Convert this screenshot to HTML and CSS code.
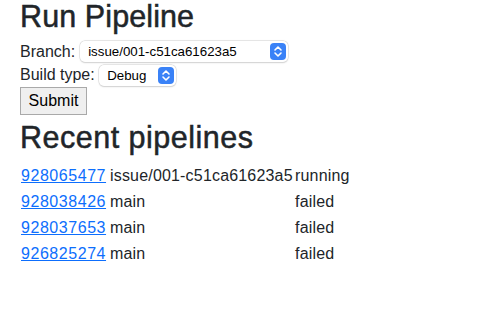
FILE: index.html
```html
<!DOCTYPE html>
<html lang="en">
<head>
<meta charset="utf-8">
<title>Run Pipeline</title>
<link rel="stylesheet" href="styles.css">
</head>
<body>
<h1 class="title">Run Pipeline</h1>
<form class="run-form">
  <div class="field">
    <label>Branch:</label>
    <span class="select select-branch"><span class="select-value">issue/001-c51ca61623a5</span><span class="select-btn"><svg width="16" height="17" viewBox="0 0 16 17"><path d="M5 7 L8 4 L11 7 M5 10 L8 13 L11 10" fill="none" stroke="#fff" stroke-width="1.6" stroke-linecap="round" stroke-linejoin="round"/></svg></span></span>
  </div>
  <div class="field">
    <label>Build type:</label>
    <span class="select select-type"><span class="select-value">Debug</span><span class="select-btn"><svg width="16" height="17" viewBox="0 0 16 17"><path d="M5 7 L8 4 L11 7 M5 10 L8 13 L11 10" fill="none" stroke="#fff" stroke-width="1.6" stroke-linecap="round" stroke-linejoin="round"/></svg></span></span>
  </div>
  <button type="button" class="submit">Submit</button>
</form>
<h2 class="title title-recent">Recent pipelines</h2>
<table class="pipelines">
  <colgroup><col class="c1"><col class="c2"><col></colgroup>
  <tr><td><a href="#">928065477</a></td><td>issue/001-c51ca61623a5</td><td>running</td></tr>
  <tr><td><a href="#">928038426</a></td><td>main</td><td>failed</td></tr>
  <tr><td><a href="#">928037653</a></td><td>main</td><td>failed</td></tr>
  <tr><td><a href="#">926825274</a></td><td>main</td><td>failed</td></tr>
</table>
</body>
</html>
```
FILE: styles.css
```css
html, body {
  margin: 0;
  padding: 0;
  background: #fff;
}
body {
  padding: 0 20px;
  font-family: "Liberation Sans", Arial, sans-serif;
  font-size: 16px;
  line-height: 24px;
  color: #212529;
}
.title {
  margin: 0 0 6.5px 0;
  font-size: 30.5px;
  line-height: 1.1;
  font-weight: 400;
  letter-spacing: 0.1px;
  -webkit-text-stroke: 0.5px #212529;
}
.title-recent {
  margin-top: 5.5px;
  margin-bottom: 9px;
  letter-spacing: 0.5px;
}
.run-form {
  margin: 0;
}
.field {
  display: flex;
  align-items: center;
  gap: 4.5px;
  height: 23.5px;
  white-space: nowrap;
}
.select {
  display: flex;
  align-items: center;
  justify-content: space-between;
  box-sizing: border-box;
  height: 21px;
  background: #fff;
  border-radius: 5px;
  box-shadow: 0 0 0 0.5px #d4d4d4, 0 0.5px 1.5px rgba(0,0,0,0.18);
  padding: 0 2px 0 8.5px;
  font-size: 13.3px;
  line-height: 17px;
  color: #000;
}
.select-branch { width: 208px; }
.select-type { width: 77px; padding-left: 8px; }
.select-btn {
  display: block;
  width: 16px;
  height: 17px;
  background: #3a82f7;
  border-radius: 4px;
}
.select-btn svg { display: block; }
.submit {
  display: block;
  box-sizing: border-box;
  height: 28px;
  width: 67px;
  margin: 0;
  padding: 0;
  font-family: "Liberation Sans", Arial, sans-serif;
  font-size: 16px;
  color: #000;
  background: #efefef;
  border: 1px solid #a9a9a9;
  border-radius: 0;
}
.pipelines {
  border-collapse: collapse;
  table-layout: fixed;
}
.pipelines col.c1 { width: 89px; }
.pipelines col.c2 { width: 185px; }
.pipelines td {
  padding: 1px 1px;
  line-height: 24px;
  white-space: nowrap;
  vertical-align: top;
  letter-spacing: 0.18px;
}
.pipelines a {
  color: #0d6efd;
  text-decoration: underline;
  letter-spacing: 0.55px;
}
```
